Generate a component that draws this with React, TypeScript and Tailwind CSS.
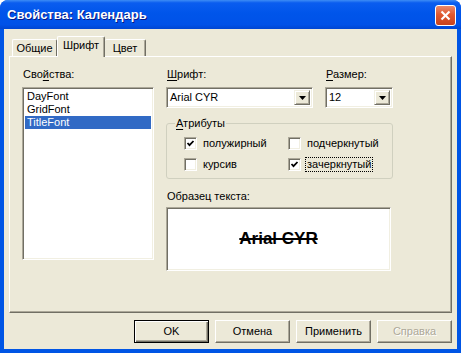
import React from "react";

const sunken =
  "border border-t-[#ACA899] border-l-[#ACA899] border-b-white border-r-white shadow-[inset_1px_1px_0_#716F64,inset_-1px_-1px_0_#F1EFE2]";

function DropBtn() {
  return (
    <div className="w-[16px] h-full bg-[#ECE9D8] border border-t-[#F1EFE2] border-l-[#F1EFE2] border-b-[#716F64] border-r-[#716F64] shadow-[inset_1px_1px_0_#fff,inset_-1px_-1px_0_#ACA899] flex items-center justify-center">
      <svg width="7" height="4" viewBox="0 0 7 4">
        <polygon points="0,0 7,0 3.5,4" fill="#000" />
      </svg>
    </div>
  );
}

function Combo({ value, width }: { value: string; width: string }) {
  return (
    <div className={`${width} h-[21px] bg-white ${sunken} p-[2px] flex`}>
      <div className="flex-1 pl-[1px] flex items-center">{value}</div>
      <DropBtn />
    </div>
  );
}

function Check({ checked }: { checked: boolean }) {
  return (
    <div className={`w-[13px] h-[13px] bg-white ${sunken} flex items-center justify-center shrink-0`}>
      {checked && (
        <svg width="9" height="9" viewBox="0 0 9 9">
          <polyline points="1.5,4 3.5,6.2 7.5,2" fill="none" stroke="#000" strokeWidth="1.8" />
        </svg>
      )}
    </div>
  );
}

function CheckItem({ label, checked, focus }: { label: string; checked: boolean; focus?: boolean }) {
  return (
    <div className="w-[104px] h-[15px] flex items-center">
      <Check checked={checked} />
      <span
        className={`ml-[4px] px-[1px] h-[15px] flex items-center border border-dotted ${
          focus ? "border-black" : "border-transparent"
        }`}
      >
        {label}
      </span>
    </div>
  );
}

function Button({ label, def, disabled }: { label: string; def?: boolean; disabled?: boolean }) {
  const base = def
    ? "border border-black shadow-[inset_1px_1px_0_#fff,inset_-1px_-1px_0_#716F64,inset_-2px_-2px_0_#ACA899]"
    : "border border-t-white border-l-white border-b-[#716F64] border-r-[#716F64] shadow-[inset_-1px_-1px_0_#ACA899]";
  return (
    <div
      className={`w-[75px] h-[23px] bg-[#ECE9D8] ${base} flex items-center justify-center ${
        disabled ? "text-[#ACA899] [text-shadow:1px_1px_0_#fff]" : "text-black"
      }`}
    >
      {label}
    </div>
  );
}

export default function App() {
  return (
    <div className="w-[461px] h-[353px] flex flex-col bg-[#0055E5] rounded-t-[8px] overflow-hidden font-['Liberation_Sans',Arial,sans-serif] text-[11px] leading-[13px] text-black select-none">
      {/* Title bar */}
      <div className="h-[29px] shrink-0 flex items-center justify-between pl-[7px] pr-[5px] bg-[linear-gradient(to_bottom,#3D8DF5_0%,#0A5DEF_10%,#0055EA_45%,#0052E8_85%,#0046D2_100%)]">
        <span className="text-white font-bold text-[13px] leading-[16px] [text-shadow:1px_1px_0_#0A1883]">
          Свойства: Календарь
        </span>
        <div className="mt-[2px] w-[21px] h-[21px] rounded-[3px] border border-white bg-[linear-gradient(to_bottom,#E98A6C_0%,#E0582F_45%,#C8421C_100%)] flex items-center justify-center">
          <svg width="11" height="11" viewBox="0 0 11 11">
            <line x1="1.5" y1="1.5" x2="9.5" y2="9.5" stroke="#fff" strokeWidth="2.2" />
            <line x1="9.5" y1="1.5" x2="1.5" y2="9.5" stroke="#fff" strokeWidth="2.2" />
          </svg>
        </div>
      </div>

      {/* Client */}
      <div className="flex-1 mx-[4px] mb-[4px] bg-[#ECE9D8] flex flex-col">
        {/* Tabs */}
        <div className="h-[28px] shrink-0 flex items-end pl-[8px] relative z-10">
          <div className="w-[45px] h-[17px] mb-[1px] border-t border-l border-white border-r border-r-[#716F64] rounded-t-[2px] flex justify-center pt-[2px]">
            Общие
          </div>
          <div className="w-[48px] h-[21px] bg-[#ECE9D8] border-t border-l border-white border-r border-r-[#716F64] shadow-[inset_-1px_0_0_#ACA899] rounded-t-[2px] flex justify-center pt-[2px]">
            Шрифт
          </div>
          <div className="w-[41px] h-[17px] mb-[1px] border-t border-white border-r border-r-[#716F64] shadow-[inset_-1px_0_0_#ACA899] rounded-t-[2px] flex justify-center pt-[2px]">
            Цвет
          </div>
        </div>

        {/* Panel */}
        <div className="-mt-[1px] ml-[5px] w-[443px] h-[257px] border border-t-white border-l-white border-r-[#716F64] border-b-[#716F64] shadow-[inset_-1px_-1px_0_#ACA899] flex pl-[12px] pt-[11px]">
          {/* Left column */}
          <div className="w-[132px] flex flex-col">
            <div className="pl-[1px] h-[13px]">
              Сво<u className="underline-offset-[2px]">й</u>ства:
            </div>
            <div className={`mt-[6px] h-[173px] bg-white ${sunken} p-[2px] flex flex-col`}>
              <div className="h-[13px] pl-[2px]">DayFont</div>
              <div className="h-[13px] pl-[2px]">GridFont</div>
              <div className="h-[13px] pl-[2px] bg-[#316AC5] text-white">TitleFont</div>
            </div>
          </div>

          {/* Right column */}
          <div className="ml-[12px] w-[227px] flex flex-col">
            <div className="flex">
              <div className="w-[147px] flex flex-col">
                <div className="pl-[1px] h-[13px]">
                  <u className="underline-offset-[2px]">Ш</u>рифт:
                </div>
                <div className="mt-[6px]">
                  <Combo value="Arial CYR" width="w-[147px]" />
                </div>
              </div>
              <div className="ml-[12px] w-[68px] flex flex-col">
                <div className="pl-[1px] h-[13px]">
                  <u className="underline-offset-[2px]">Р</u>азмер:
                </div>
                <div className="mt-[6px]">
                  <Combo value="12" width="w-[68px]" />
                </div>
              </div>
            </div>

            <fieldset className="mt-[9px] w-[226px] border border-[#D0D0BF] rounded-[3px] pl-[17px] pb-[6px]">
              <legend className="ml-[-9px] px-[1px] h-[13px] leading-[13px]">
                <u className="underline-offset-[2px]">А</u>трибуты
              </legend>
              <div className="pt-[6px] flex flex-col gap-[6px]">
                <div className="flex">
                  <CheckItem label="полужирный" checked />
                  <CheckItem label="подчеркнутый" checked={false} />
                </div>
                <div className="flex">
                  <CheckItem label="курсив" checked={false} />
                  <CheckItem label="зачеркнутый" checked focus />
                </div>
              </div>
            </fieldset>

            <div className="mt-[11px] pl-[1px] h-[13px]">Образец текста:</div>
            <div className={`mt-[4px] w-[225px] h-[64px] bg-white ${sunken} flex items-center justify-center`}>
              <span className="font-bold text-[17px] leading-[20px] line-through decoration-[1.5px]">Arial CYR</span>
            </div>
          </div>
        </div>

        {/* Buttons */}
        <div className="mt-[7px] flex justify-end gap-[6px] pr-[5px]">
          <Button label="OK" def />
          <Button label="Отмена" />
          <Button label="Применить" />
          <Button label="Справка" disabled />
        </div>
      </div>
    </div>
  );
}
